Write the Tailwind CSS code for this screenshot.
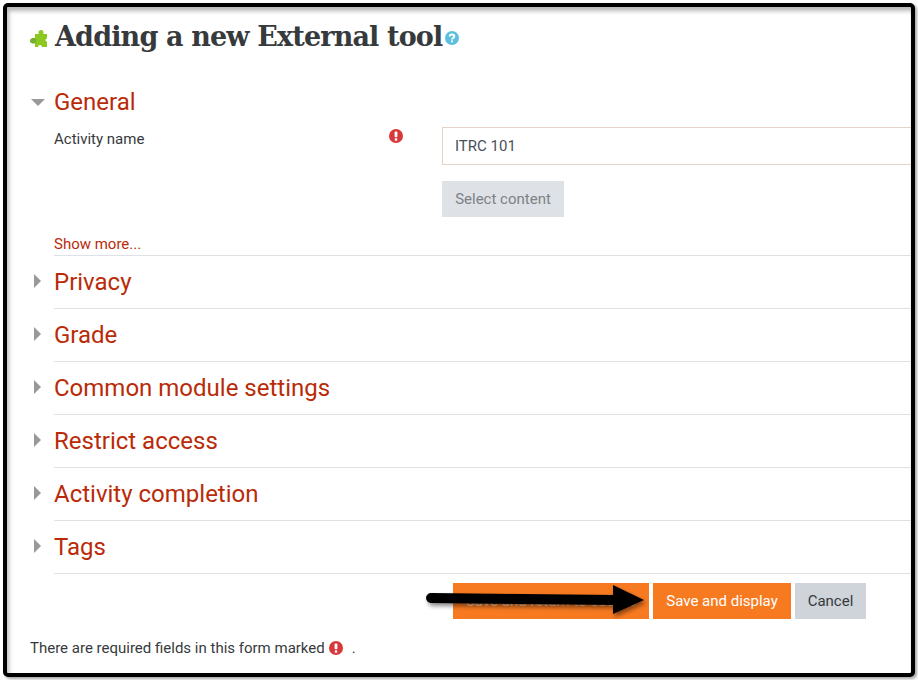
<!DOCTYPE html>
<html>
<head>
    <meta charset="utf-8">
    <title>Adding a new External tool</title>
    <script src="https://cdn.jsdelivr.net/npm/@tailwindcss/browser@4"></script>
</head>
<body class="bg-white font-['Roboto',sans-serif] text-[#373a3c] overflow-hidden">
    <!-- screenshot frame -->
    <div class="w-[918px] h-[680px] pt-[3px] pl-[3px] pr-[3px] pb-[3px]">
        <div class="h-full border-4 border-black rounded-[5px] overflow-hidden bg-white shadow-[2px_2px_3px_rgba(0,0,0,0.35),inset_2px_4px_4px_rgba(0,0,0,0.28)]">
            <div class="pl-[23px] pt-[7px] h-full relative">

                <div class="flex items-center h-[44px]">
                    <svg class="w-[17px] h-[17px] mr-[7px] mt-[4px]" viewBox="0 0 17 17">
                        <rect x="5" y="4" width="12" height="13" fill="#8cc820"/>
                        <circle cx="11" cy="2.500" r="2.500" fill="#8cc820"/>
                        <rect x="9.500" y="3" width="3" height="2" fill="#8cc820"/>
                        <rect x="1.500" y="8" width="4.500" height="5.500" rx="1.500" fill="#76b02a"/>
                        <circle cx="2.500" cy="10.700" r="2.500" fill="#76b02a"/>
                        <circle cx="10" cy="17" r="2" fill="#fff"/>
                        <circle cx="17" cy="10" r="1.500" fill="#fff"/>
                    </svg>
                    <h2 class="font-['DejaVu_Serif',serif] font-bold text-[27px] leading-none text-[#373a3c] whitespace-nowrap tracking-[-0.84px] ml-[1px]">Adding a new External tool</h2>
                    <svg class="w-[14px] h-[14px] ml-[3px] mt-1" viewBox="0 0 14 14">
                        <circle cx="7" cy="7" r="7" fill="#5bc0de"/>
                        <path fill="none" stroke="#fff" stroke-width="1.900" d="M4.700 5.500c0-1.300 1-2 2.300-2s2.300.8 2.300 1.900c0 1.700-2.300 1.500-2.300 3.100"/>
                        <rect x="6" y="9.400" width="2" height="1.900" fill="#fff"/>
                    </svg>
                </div>

                <!-- General -->
                <div class="flex items-center h-[36px] mt-[26px]">
                    <svg class="w-[14px] h-[7px] mr-[9px] ml-[1px]" viewBox="0 0 14 7"><path fill="#999" d="M0 0h14L7 7z"/></svg>
                    <h3 class="text-[24px] leading-none text-[#b92b08]">General</h3>
                </div>

                <div class="flex pl-[24px] mt-[7px] h-[38px]">
                    <div class="w-[335px] text-[15px] leading-[21px] pt-[2px]">Activity name</div>
                    <svg class="w-[14px] h-[14px] mt-[2px]" viewBox="0 0 14 14">
                        <circle cx="7" cy="7" r="7" fill="#d9383a"/>
                        <rect x="5.600" y="2.400" width="2.800" height="5.800" rx="1" fill="#fff"/>
                        <rect x="5.800" y="9.300" width="2.400" height="2.400" fill="#fff"/>
                    </svg>
                    <div class="ml-[39px] grow h-[38px] border border-[#e6d3c7] border-r-0 pl-[12px] flex items-center text-[15px] text-[#495057]">ITRC 101</div>
                </div>
                <div class="ml-[412px] mt-[16px] w-[122px] h-[36px] bg-[#dee2e6] flex items-center justify-center text-[15px] text-[#7c8186]">Select content</div>

                <div class="ml-[24px] mt-[17px] h-[20px] text-[15px] leading-[20px] text-[#b92b08] border-b border-[#dee2e6] box-content pb-[1px]">Show more...</div>

                <!-- collapsed sections -->
                <div class="ml-[24px] relative flex items-center h-[53px] border-b border-[#dee2e6] text-[24px] text-[#b92b08]"><svg class="absolute -left-[20px] top-[18px] w-[7px] h-[14px]" viewBox="0 0 7 14"><path fill="#999" d="M0 0l7 7-7 7z"/></svg>Privacy</div>
                <div class="ml-[24px] relative flex items-center h-[53px] border-b border-[#dee2e6] text-[24px] text-[#b92b08]"><svg class="absolute -left-[20px] top-[18px] w-[7px] h-[14px]" viewBox="0 0 7 14"><path fill="#999" d="M0 0l7 7-7 7z"/></svg>Grade</div>
                <div class="ml-[24px] relative flex items-center h-[53px] border-b border-[#dee2e6] text-[24px] text-[#b92b08]"><svg class="absolute -left-[20px] top-[18px] w-[7px] h-[14px]" viewBox="0 0 7 14"><path fill="#999" d="M0 0l7 7-7 7z"/></svg>Common module settings</div>
                <div class="ml-[24px] relative flex items-center h-[53px] border-b border-[#dee2e6] text-[24px] text-[#b92b08]"><svg class="absolute -left-[20px] top-[18px] w-[7px] h-[14px]" viewBox="0 0 7 14"><path fill="#999" d="M0 0l7 7-7 7z"/></svg>Restrict access</div>
                <div class="ml-[24px] relative flex items-center h-[53px] border-b border-[#dee2e6] text-[24px] text-[#b92b08]"><svg class="absolute -left-[20px] top-[18px] w-[7px] h-[14px]" viewBox="0 0 7 14"><path fill="#999" d="M0 0l7 7-7 7z"/></svg>Activity completion</div>
                <div class="ml-[24px] relative flex items-center h-[53px] border-b border-[#dee2e6] text-[24px] text-[#b92b08]"><svg class="absolute -left-[20px] top-[18px] w-[7px] h-[14px]" viewBox="0 0 7 14"><path fill="#999" d="M0 0l7 7-7 7z"/></svg>Tags</div>

                <!-- buttons -->
                <div class="flex ml-[423px] mt-[9px] gap-[4px] text-[15px]">
                    <div class="w-[196px] h-[36px] bg-[#f77a21] text-white/60 flex items-center justify-center whitespace-nowrap">Save and return to course</div>
                    <div class="w-[138px] h-[36px] bg-[#f77a21] text-white flex items-center justify-center">Save and display</div>
                    <div class="w-[71px] h-[36px] bg-[#ced4da] flex items-center justify-center">Cancel</div>
                </div>

                <div class="flex items-center mt-[19px] text-[15px] h-[21px]">
                    There are required fields in this form marked
                    <svg class="w-[14px] h-[14px] ml-[4px] -mt-[2px]" viewBox="0 0 14 14">
                        <circle cx="7" cy="7" r="7" fill="#d9383a"/>
                        <rect x="5.600" y="2.400" width="2.800" height="5.800" rx="1" fill="#fff"/>
                        <rect x="5.800" y="9.300" width="2.400" height="2.400" fill="#fff"/>
                    </svg>
                    <span class="ml-[9px]">.</span>
                </div>

                <!-- annotation arrow over the buttons -->
                <svg class="absolute left-[419px] top-[578px] w-[225px] h-[40px] drop-shadow-[2px_3px_2px_rgba(0,0,0,0.45)]" viewBox="0 0 225 40">
                    <path d="M5 13L190 15" stroke="#000" stroke-width="10" stroke-linecap="round" fill="none"/>
                    <path d="M187 0l31 15-31 14z" fill="#000"/>
                </svg>
            </div>
        </div>
    </div>
</body>
</html>
